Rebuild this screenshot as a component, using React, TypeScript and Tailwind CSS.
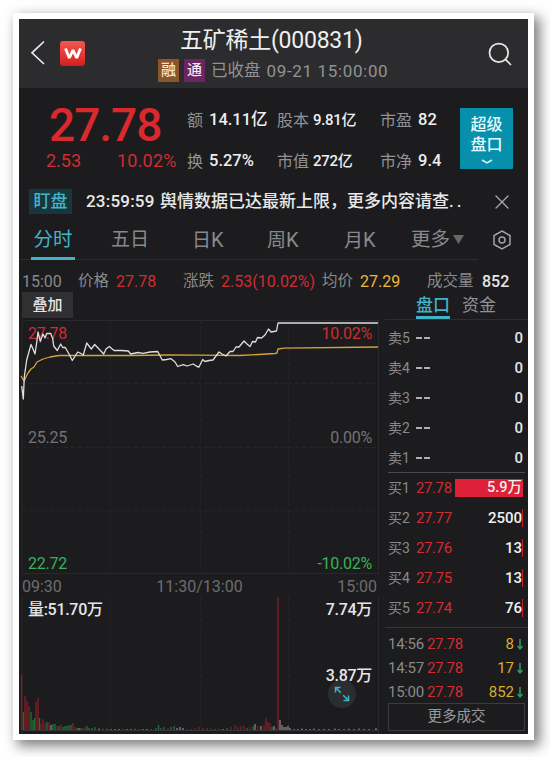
import { Search, X } from 'lucide-react';

interface Level {
    label: string;
    price: string;
    volume: string;
}

interface Trade {
    time: string;
    price: string;
    volume: string;
}

const asks: Level[] = ['5', '4', '3', '2', '1'].map((n) => ({ label: `卖${n}`, price: '--', volume: '0' }));

const bids: Level[] = [
    { label: '买1', price: '27.78', volume: '5.9万' },
    { label: '买2', price: '27.77', volume: '2500' },
    { label: '买3', price: '27.76', volume: '13' },
    { label: '买4', price: '27.75', volume: '13' },
    { label: '买5', price: '27.74', volume: '76' },
];

const trades: Trade[] = [
    { time: '14:56', price: '27.78', volume: '8' },
    { time: '14:57', price: '27.78', volume: '17' },
    { time: '15:00', price: '27.78', volume: '852' },
];

const RED = '#7d1f24';
const GREEN = '#1f6d38';
const GREY = '#7c7c7c';

// [x, height, color] of the minute volume bars
const volumeBars: [number, number, string][] = [
    [2.5, 55, RED], [4.5, 18, GREEN], [6, 34, RED], [8, 29, RED], [10, 24, RED], [12, 18, GREEN],
    [14, 10, GREEN], [15.5, 12, GREEN], [17, 28, RED], [19, 32, RED], [20.5, 12, GREEN], [22, 6, RED],
    [24, 11, RED], [26, 7, RED], [28, 8, GREEN], [30, 8, RED], [32, 5, GREY], [34, 6, GREEN],
    [36, 6, GREEN], [38, 4, RED], [40, 4, GREEN], [42, 5, RED], [44, 3, GREEN], [46, 4, GREEN],
    [48, 4, GREEN], [50, 5, GREEN], [52, 5, GREEN], [54, 7, RED], [56, 3, RED], [58, 2, GREEN],
    [60, 2, GREY], [62, 2, GREEN], [64, 2, RED], [66, 3, RED], [68, 4, GREEN], [70, 2, GREEN],
    [73, 2, GREEN], [76, 3, GREEN], [80, 1.5, GREY], [84, 2, RED], [88, 1.5, GREEN], [92, 1, GREY],
    [96, 1, GREY], [100, 1, GREY], [104, 1.5, RED], [108, 1, GREY], [112, 1, GREY], [116, 1.5, GREEN],
    [120, 1, RED], [124, 1, GREY], [128, 1, GREY], [132, 1, GREEN], [137, 2, GREEN], [139.5, 5, GREEN],
    [142, 2, GREEN], [145, 3, GREEN], [149, 2, RED], [152, 3, GREEN], [155, 4, GREEN], [158, 2, GREY],
    [161, 3, GREY], [164, 2, GREY], [168, 1, RED], [172, 1, GREEN], [176, 2, RED], [180, 3, RED],
    [184, 1.5, GREEN], [188, 2, RED], [192, 2, RED], [196, 1, GREEN], [200, 1.5, RED], [204, 1, GREY],
    [208, 2, GREEN], [212, 3, RED], [216, 5, RED], [219, 3, RED], [222, 4, RED], [225, 4, RED],
    [228, 2, GREEN], [231, 3, RED], [234, 4, GREEN], [236, 6, GREY], [239, 4, RED], [242, 4, GREY],
    [245, 5, RED], [247, 12, RED], [249, 8, RED], [251, 7, RED], [253, 3, GREEN], [255, 4, GREY],
    [257, 2, RED], [259, 133, RED], [261, 10, GREY], [263, 5, GREY], [265, 3, GREY], [267, 3, GREY],
    [269, 4, GREY], [271, 2, GREY], [275, 1, GREY], [279, 1, GREY], [283, 1.5, GREY], [287, 1, GREY],
    [291, 1, GREY], [295, 1.5, GREY], [300, 1, GREY], [305, 1, GREY], [310, 1, GREY], [316, 1.5, GREY],
    [320, 1, GREY], [325, 1, GREY], [330, 1.5, GREY], [335, 1, GREY], [340, 1.5, GREY], [345, 1, GREY],
    [350, 1, GREY], [357, 2, GREY],
];

const priceLine =
    '2.7,66 4.3,79 5.3,57 7.7,40 12,24.5 14,29 16,34 17.5,24 19,12 21.3,21.5 24,14 26,18 27.7,13.5 31.7,13.5 33.7,18.5 34.7,26 38.3,30.5 41.7,24 43.7,27.5 46.3,27.5 50,34 53.3,40.5 58.7,32 61,33 64.3,35 67.7,23 72.3,29 75.7,24.5 80,29 84.7,34 87,29 90.3,26.5 95,30.5 102,30.5 109.3,31 111.7,34 119,32.5 124,33.3 131,32 138.7,31.5 143.3,40 147.7,39.5 152,38.7 156,42 158.7,46.5 164.3,44.7 168,46 174.3,44 178,46.5 180,47 183.7,39.5 186,41.5 190,40.5 194,40 197,36 200,32 203,34 207,36 211,31.5 214,31.5 217,27 220,27 225,21 228,24 231,26.5 233.5,21.5 236.5,22 238.5,17.5 242.5,18 246,15 249.5,9 252,12 257.5,11 259,3 359,3';

const averageLine =
    '2,56 5,61 7,57 9,53 12,49 15,47 18,42 24,39 31,37 40,35.5 60,35.5 110,35.5 150,35 180,35.2 220,35.5 240,34.5 256,33.5 258,33 259,29 265,28.2 359,27';

function Stat({ label, value, labelClass, valueClass }: { label: string; value: string; labelClass: string; valueClass: string }) {
    return (
        <div className="flex items-center">
            <span className={`shrink-0 text-[16px] text-[#929294] ${labelClass}`}>{label}</span>
            <span className={`font-medium text-[#eeeeef] ${valueClass}`}>{value}</span>
        </div>
    );
}

function Header() {
    return (
        <header className="flex h-[69px] shrink-0 bg-[#2c2c2e]">
            <div className="flex w-[139px] items-start pt-[18px] pl-[7px]">
                <svg className="mt-[3px] h-[25px] w-[20px]" viewBox="0 0 20 25" fill="none" stroke="#e8e8e8" strokeWidth="1.7">
                    <path d="M18 1.5L6 12.8L18 24" />
                </svg>
                <div className="mt-[4px] ml-[14px] flex h-[25px] w-[25px] items-center justify-center rounded-[3px] bg-linear-to-b from-[#f2564c] to-[#d8191f]">
                    <svg className="h-[12px] w-[18px]" viewBox="0 0 18 12" fill="none" stroke="#fff" strokeWidth="2.8">
                        <path d="M1.5 .5L5.3 10L9 2.2L12.7 10L16.5 .5" strokeLinejoin="bevel" />
                    </svg>
                </div>
            </div>
            <div className="w-[320px]">
                <h1 className="mt-[8px] ml-[22px] text-[23px] leading-[28px] font-normal tracking-[-0.25px] text-[#efeff0]">五矿稀土(000831)</h1>
                <div className="mt-[4px] flex h-[23px] items-center">
                    <span className="flex h-[23px] w-[21px] items-center justify-center bg-[#8d5427] text-[15px] font-medium text-[#f2e6da]">融</span>
                    <span className="ml-[5px] flex h-[23px] w-[21px] items-center justify-center bg-[#6a2562] text-[15px] font-medium text-[#f2e6f0]">通</span>
                    <span className="ml-[6px] pt-[2px] text-[16.5px] text-[#929294]">已收盘</span>
                    <span className="ml-[6px] pt-[2px] text-[17px] tracking-[0.65px] text-[#929294]">09-21 15:00:00</span>
                </div>
            </div>
            <Search className="mt-[21px] ml-[8px] h-[28px] w-[28px] text-[#e6e6e6]" strokeWidth={1.5} />
        </header>
    );
}

function Summary() {
    return (
        <section className="flex h-[97px] shrink-0">
            <div className="w-[168px]">
                <div className="mt-[14px] ml-[30px] text-[46px] leading-[46px] font-medium tracking-[-1px] text-[#d9292f]">27.78</div>
                <div className="mt-[2px] ml-[27px] flex text-[18px] leading-[22px] text-[#d02c31]">
                    <span className="w-[71px]">2.53</span>
                    <span className="tracking-[0.2px]">10.02%</span>
                </div>
            </div>
            <div className="grid grid-cols-[90px_103px_80px] grid-rows-[41px_41px] pt-[12px]">
                <Stat label="额" value="14.11亿" labelClass="w-[22px]" valueClass="text-[16.5px]" />
                <Stat label="股本" value="9.81亿" labelClass="w-[36px]" valueClass="text-[15px] tracking-[-0.3px]" />
                <Stat label="市盈" value="82" labelClass="w-[38px]" valueClass="text-[16.5px]" />
                <Stat label="换" value="5.27%" labelClass="w-[22px]" valueClass="text-[16.5px]" />
                <Stat label="市值" value="272亿" labelClass="w-[36px]" valueClass="text-[15px] tracking-[-0.3px]" />
                <Stat label="市净" value="9.4" labelClass="w-[38px]" valueClass="text-[16.5px]" />
            </div>
            <button className="mt-[20px] flex h-[61px] w-[53px] flex-col items-center rounded-[1px] bg-[#0690ab] pt-[7px] text-[16px] leading-[20px] font-medium text-[#e6fbff]">
                <span>超级</span>
                <span>盘口</span>
                <svg className="mt-[4px] h-[5px] w-[12px]" viewBox="0 0 12 5" fill="none" stroke="#d8f6fb" strokeWidth="1.5">
                    <path d="M1 1L6 3.8L11 1" />
                </svg>
            </button>
        </section>
    );
}

function Notice() {
    return (
        <div className="flex h-[33px] shrink-0 items-center">
            <span className="ml-[10px] flex h-[25px] w-[43px] items-center justify-center bg-[#18363b] text-[17px] font-medium text-[#43b5c8]">盯盘</span>
            <span className="ml-[14px] w-[74px] shrink-0 pt-px text-[17px] font-medium tracking-[0.2px] text-[#e9e9ea]">23:59:59</span>
            <span className="w-[332px] shrink-0 pt-px text-[17px] font-medium whitespace-nowrap text-[#e9e9ea]">
                舆情数据已达最新上限，更多内容请查<span className="tracking-[3px]">..</span>
            </span>
            <X className="h-[24px] w-[24px] -translate-x-[2px] text-[#aaaaac]" strokeWidth={1.3} />
        </div>
    );
}

function Tabs() {
    return (
        <nav className="flex h-[42px] shrink-0 text-[19px] leading-[44px] text-[#89898b]">
            <div className="flex w-[459px] border-b border-[#2e2e30] pl-[12px]">
                <div className="flex h-[42px] w-[44px] flex-col items-center border-b-[3px] border-[#3fb4c8] text-[#3fb4c8]">
                    <span className="text-[19.5px]">分时</span>
                </div>
                <span className="ml-[36px] w-[81px]">五日</span>
                <span className="w-[75px]">日<span className="text-[20px]">K</span></span>
                <span className="w-[77px]">周<span className="text-[20px]">K</span></span>
                <span className="w-[67px]">月<span className="text-[20px]">K</span></span>
                <span className="text-[19.5px]">更多</span>
                <svg className="mt-[17px] ml-[3px] h-[9px] w-[11px]" viewBox="0 0 11 9" fill="#68686a">
                    <path d="M0 0H11L5.5 9Z" />
                </svg>
            </div>
            <svg className="mt-[12px] ml-[14px] h-[20px] w-[20px]" viewBox="0 0 20 20" fill="none" stroke="#a2a2a4" strokeWidth="1.5">
                <path d="M10 1L18 5.5V14.5L10 19L2 14.5V5.5Z" />
                <circle cx="10" cy="10" r="3" />
            </svg>
        </nav>
    );
}

function InfoBar() {
    return (
        <div className="flex h-[32px] shrink-0 items-center pt-[11px] pl-[3px] text-[15.5px] whitespace-nowrap text-[#89898b]">
            <span className="w-[56px] shrink-0 text-[16px]">15:00</span>
            <span className="w-[38px] shrink-0">价格</span>
            <span className="w-[67px] shrink-0 text-[16px] text-[#cf2d32]">27.78</span>
            <span className="w-[38px] shrink-0">涨跌</span>
            <span className="w-[101px] shrink-0 text-[16px] text-[#cf2d32]">2.53(10.02%)</span>
            <span className="w-[38px] shrink-0">均价</span>
            <span className="w-[67px] shrink-0 text-[16px] text-[#edb740]">27.29</span>
            <span className="w-[55px] shrink-0">成交量</span>
            <span className="text-[16px] font-medium text-[#e6e6e7]">852</span>
        </div>
    );
}

function PriceChart() {
    return (
        <div className="relative h-[254px] shrink-0 text-[16px] leading-[20px]">
            <svg className="absolute inset-0 h-full w-full" viewBox="0 0 360 254" fill="none">
                <path d="M3 .5H359.5V254M3 .5V254M3 253.5H360" stroke="#29292b" />
                <path
                    d="M3 63.5H360M3 127.5H360M3 190.5H360M91.5 0V254M181.5 0V254M269.5 0V254"
                    stroke="#252527"
                    strokeDasharray="4 3"
                />
            </svg>
            <div className="relative flex h-full flex-col pr-[7px] pl-[9px] tracking-[-0.25px]">
                <div className="mt-[4px] flex justify-between text-[#cf2d32]">
                    <span>27.78</span>
                    <span>10.02%</span>
                </div>
                <div className="mt-[84px] flex justify-between text-[#737375]">
                    <span>25.25</span>
                    <span>0.00%</span>
                </div>
                <div className="mt-[106px] flex justify-between text-[#34b552]">
                    <span>22.72</span>
                    <span>-10.02%</span>
                </div>
            </div>
            <svg className="absolute inset-0 h-full w-full" viewBox="0 0 360 254" fill="none" strokeLinejoin="round">
                <polyline points={averageLine} stroke="#d3a23b" strokeWidth="1.3" />
                <polyline points={priceLine} stroke="#dededf" strokeWidth="1.3" />
            </svg>
        </div>
    );
}

function VolumeChart() {
    return (
        <div className="relative h-[137px] text-[16px] leading-[20px] text-[#e6e6e7]">
            <svg className="absolute inset-0 h-[137px] w-[360px]" viewBox="0 0 360 137" fill="none">
                <path d="M3 0V137M359.5 0V137" stroke="#29292b" />
                <path d="M91.5 0V133M181.5 0V133M269.5 0V133" stroke="#252527" strokeDasharray="4 3" />
                {volumeBars.map(([x, height, color]) => (
                    <rect key={x} x={x - 0.7} y={133 - height} width="1.4" height={height} fill={color} />
                ))}
                <path d="M3 133.5H360" stroke="#343436" />
            </svg>
            <div className="relative flex justify-between pt-[3px] pr-[7px] pl-[9px] font-medium tracking-[-0.3px]">
                <span>量:51.70万</span>
                <span>7.74万</span>
            </div>
            <div className="absolute top-[83px] left-[309px] flex h-[28px] w-[28px] items-center justify-center rounded-full bg-[#2c2d2f]">
                <svg className="h-[16px] w-[16px]" viewBox="0 0 16 16" fill="none" stroke="#3fb4c8" strokeWidth="1.5">
                    <path d="M1.5 6.5V1.5H6.5M1.5 1.5L6.8 6.8M14.5 9.5V14.5H9.5M14.5 14.5L9.2 9.2" />
                </svg>
            </div>
            <div className="relative mt-[46px] flex justify-end pr-[7px] font-medium tracking-[-0.3px]">3.87万</div>
        </div>
    );
}

function OrderBook() {
    return (
        <div className="text-[15px] text-[#89898b]">
            <div className="h-[153px] border-t border-[#2e2e30] pt-[3px]">
                {asks.map((row) => (
                    <div key={row.label} className="flex h-[30px] items-center pr-[5px] pl-[3px]">
                        <span className="w-[28px] text-[14px]">{row.label}</span>
                        <span className="flex flex-1 gap-[2px]">
                            <i className="h-[1.5px] w-[6px] bg-[#b0b0b2]" />
                            <i className="h-[1.5px] w-[6px] bg-[#b0b0b2]" />
                        </span>
                        <span className="font-medium text-[#e6e6e7]">{row.volume}</span>
                    </div>
                ))}
            </div>
            <div className="mr-[3px] ml-[3px] border-t border-[#4a4a4c]" />
            <div>
                {bids.map((row, i) => (
                    <div key={row.label} className="flex h-[30px] items-center pr-[5px] pl-[3px]">
                        <span className="w-[28px] text-[14px]">{row.label}</span>
                        <span className="w-[39px] tracking-[-0.4px] text-[#cf2d32]">{row.price}</span>
                        <span
                            className={`flex h-[18px] flex-1 items-center justify-end font-medium text-[#f0f0f1] ${
                                i === 0 ? 'bg-[#dc2138] pr-[1px] text-[14.5px]' : 'border-r border-[#c0202f]'
                            }`}
                        >
                            {row.volume}
                        </span>
                    </div>
                ))}
            </div>
        </div>
    );
}

function TradeList() {
    return (
        <div className="mt-[4px] border-t border-[#363638] pt-[4px] text-[15px]">
            {trades.map((trade) => (
                <div key={trade.time} className="flex h-[24px] items-center pr-[5px] pl-[3px]">
                    <span className="w-[39px] tracking-[-0.3px] text-[#89898b]">{trade.time}</span>
                    <span className="flex-1 tracking-[-0.4px] text-[#cf2d32]">{trade.price}</span>
                    <span className="text-[#d9ad31]">{trade.volume}</span>
                    <svg className="ml-[3px] h-[11px] w-[6px]" viewBox="0 0 6 11" fill="none" stroke="#2f9e63" strokeWidth="1.5">
                        <path d="M3 0V9.5M0.5 7L3 9.8L5.5 7" />
                    </svg>
                </div>
            ))}
            <button className="mt-[-1px] ml-[3px] flex h-[28px] w-[137px] items-center justify-center border border-[#3c3c3e] text-[14.5px] text-[#99999b]">
                更多成交
            </button>
        </div>
    );
}

export default function App() {
    return (
        <div className="h-[757px] w-[550px] overflow-hidden bg-white pt-[13px] pl-[13px]">
            <div className="h-[727px] w-[521px] border-[6px] border-white bg-[#1c1c1e] shadow-[5px_5px_12px_1px_rgba(0,0,0,0.5)]">
                <div className="flex h-[715px] w-[509px] flex-col overflow-hidden font-['Roboto','Noto_Sans_CJK_SC',sans-serif]">
                    <Header />
                    <Summary />
                    <Notice />
                    <Tabs />
                    <InfoBar />
                    <div className="flex flex-1">
                        <div className="w-[360px] shrink-0">
                            <div className="h-[28px] pl-[3px]">
                                <button className="flex h-[26px] w-[51px] items-center justify-center bg-[#303033] text-[15px] font-medium text-[#e6e6e7]">
                                    叠加
                                </button>
                            </div>
                            <PriceChart />
                            <div className="flex h-[23px] items-center justify-between pt-[3px] pr-[2px] pl-[3px] text-[16px] text-[#6d6d6f]">
                                <span>09:30</span>
                                <span>11:30/13:00</span>
                                <span>15:00</span>
                            </div>
                            <VolumeChart />
                        </div>
                        <div className="ml-[6px] w-[143px] shrink-0">
                            <div className="flex h-[27px] pl-[31px] text-[17px] leading-[27px] text-[#929294]">
                                <span className="h-[27px] w-[34px] border-b-[3px] border-[#3fb4c8] font-medium text-[#3fb4c8]">盘口</span>
                                <span className="ml-[12px]">资金</span>
                            </div>
                            <OrderBook />
                            <TradeList />
                        </div>
                    </div>
                </div>
            </div>
        </div>
    );
}
